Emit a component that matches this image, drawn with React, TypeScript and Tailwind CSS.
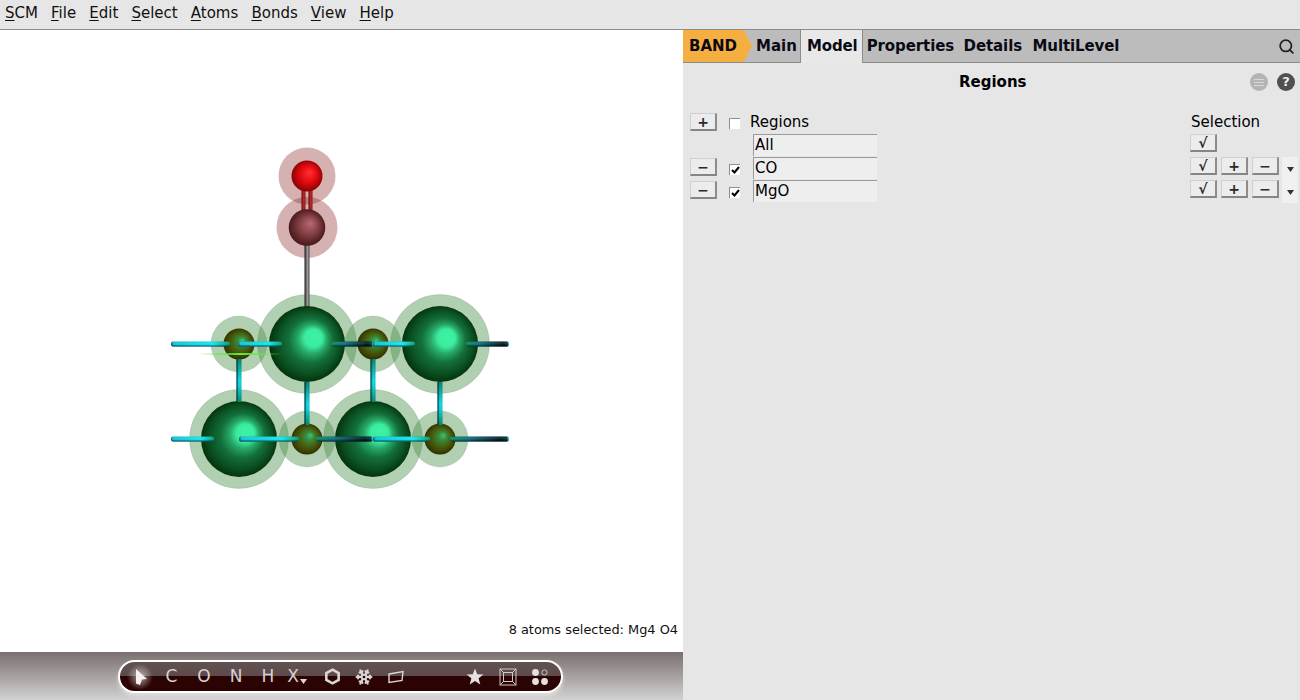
import React from "react";
import { Search, Snowflake } from "lucide-react";

const FONT = "[font-family:'DejaVu_Sans',sans-serif]";

const menus = [
  ["S", "CM"],
  ["F", "ile"],
  ["E", "dit"],
  ["S", "elect"],
  ["A", "toms"],
  ["B", "onds"],
  ["V", "iew"],
  ["H", "elp"],
];

const bigAtoms = [
  [307, 344],
  [440, 344],
  [239, 439],
  [373, 439],
];
const smallAtoms = [
  [239, 344],
  [373, 344],
  [307, 439],
  [440, 439],
];

// horizontal bonds: y, x1, x2, kind
const hBonds: [number, number, number, "cyan" | "dark"][] = [
  [344, 171, 230, "cyan"],
  [344, 238, 282, "cyan"],
  [344, 332, 373, "dark"],
  [344, 373, 415, "cyan"],
  [344, 466, 509, "dark"],
  [439, 171, 214, "cyan"],
  [439, 239, 299, "cyan"],
  [439, 316, 373, "dark"],
  [439, 373, 430, "cyan"],
  [439, 450, 509, "dark"],
];
const vBonds: [number, number, number][] = [
  [239, 359, 402],
  [307, 382, 425],
  [373, 359, 402],
  [440, 382, 425],
];

function Molecule() {
  return (
    <svg viewBox="0 30 683 622" className="block h-[622px] w-[683px]">
      <defs>
        <radialGradient id="big" cx="0.5" cy="0.5" r="0.53" fx="0.61" fy="0.4">
          <stop offset="0" stopColor="#3ef2a2" />
          <stop offset="0.22" stopColor="#3becA0" />
          <stop offset="0.36" stopColor="#27a868" />
          <stop offset="0.55" stopColor="#13703a" />
          <stop offset="0.78" stopColor="#0b5022" />
          <stop offset="1" stopColor="#012c04" />
        </radialGradient>
        <radialGradient id="small" cx="0.5" cy="0.5" r="0.54" fx="0.62" fy="0.38">
          <stop offset="0" stopColor="#3cc47c" />
          <stop offset="0.25" stopColor="#3a8a3a" />
          <stop offset="0.6" stopColor="#465a0c" />
          <stop offset="0.85" stopColor="#3a3c02" />
          <stop offset="1" stopColor="#1c2a00" />
        </radialGradient>
        <radialGradient id="oxy" cx="0.5" cy="0.5" r="0.56" fx="0.6" fy="0.38">
          <stop offset="0" stopColor="#ff3030" />
          <stop offset="0.45" stopColor="#e80c12" />
          <stop offset="1" stopColor="#7a0000" />
        </radialGradient>
        <radialGradient id="carb" cx="0.5" cy="0.5" r="0.56" fx="0.6" fy="0.38">
          <stop offset="0" stopColor="#b86a70" />
          <stop offset="0.5" stopColor="#7f3d42" />
          <stop offset="1" stopColor="#3b1012" />
        </radialGradient>
        <linearGradient id="cyanB" x1="0" x2="1" y1="0" y2="0">
          <stop offset="0" stopColor="#0b5a68" />
          <stop offset="0.05" stopColor="#10c8d8" />
          <stop offset="0.7" stopColor="#12eaf4" />
          <stop offset="0.92" stopColor="#0cb09a" />
          <stop offset="1" stopColor="#0a9068" />
        </linearGradient>
        <linearGradient id="darkB" x1="0" x2="1" y1="0" y2="0">
          <stop offset="0" stopColor="#0a8a60" />
          <stop offset="0.3" stopColor="#0c7080" />
          <stop offset="0.85" stopColor="#031c20" />
          <stop offset="0.96" stopColor="#06303a" />
          <stop offset="1" stopColor="#18e6f0" />
        </linearGradient>
        <linearGradient id="vB" x1="0" x2="0" y1="0" y2="1">
          <stop offset="0" stopColor="#0a8a7c" />
          <stop offset="0.5" stopColor="#14e0ec" />
          <stop offset="0.62" stopColor="#14d8e8" />
          <stop offset="1" stopColor="#0a9070" />
        </linearGradient>
        <linearGradient id="shadeV" x1="0" x2="0" y1="0" y2="1">
          <stop offset="0" stopColor="#000" stopOpacity="0.1" />
          <stop offset="0.3" stopColor="#fff" stopOpacity="0.15" />
          <stop offset="0.65" stopColor="#000" stopOpacity="0" />
          <stop offset="1" stopColor="#000" stopOpacity="0.75" />
        </linearGradient>
        <linearGradient id="shadeH" x1="0" x2="1" y1="0" y2="0">
          <stop offset="0" stopColor="#000" stopOpacity="0.8" />
          <stop offset="0.45" stopColor="#000" stopOpacity="0" />
          <stop offset="1" stopColor="#000" stopOpacity="0.1" />
        </linearGradient>
        <linearGradient id="grayB" x1="0" x2="1" y1="0" y2="0">
          <stop offset="0" stopColor="#1c1c1c" />
          <stop offset="0.6" stopColor="#9a9a9a" />
          <stop offset="1" stopColor="#444" />
        </linearGradient>
        <linearGradient id="redB" x1="0" x2="1" y1="0" y2="0">
          <stop offset="0" stopColor="#5e0a0a" />
          <stop offset="0.6" stopColor="#c62a2a" />
          <stop offset="1" stopColor="#7c1414" />
        </linearGradient>
      </defs>

      {/* translucent shells */}
      {bigAtoms.map(([x, y]) => (
        <circle key={`hb${x}${y}`} cx={x} cy={y} r={49.5} fill="rgb(70,140,70)" fillOpacity={0.42} stroke="#6f8a6f" strokeOpacity={0.2} />
      ))}
      {smallAtoms.map(([x, y]) => (
        <circle key={`hs${x}${y}`} cx={x} cy={y} r={28} fill="rgb(70,140,70)" fillOpacity={0.42} stroke="#6f8a6f" strokeOpacity={0.2} />
      ))}
      <circle cx={307} cy={176} r={28.5} fill="rgb(140,40,40)" fillOpacity={0.36} />
      <circle cx={307} cy={227.5} r={30.5} fill="rgb(140,40,40)" fillOpacity={0.36} />

      {/* carbon-oxygen and carbon-surface bonds */}
      <rect x={301.5} y={188} width={4} height={26} fill="url(#redB)" />
      <rect x={308.5} y={188} width={4} height={26} fill="url(#redB)" />
      <rect x={304.5} y={244} width={5} height={64} fill="url(#grayB)" />

      {/* spheres */}
      {bigAtoms.map(([x, y]) => (
        <circle key={`b${x}${y}`} cx={x} cy={y} r={38} fill="url(#big)" />
      ))}
      {smallAtoms.map(([x, y]) => (
        <circle key={`s${x}${y}`} cx={x} cy={y} r={15.5} fill="url(#small)" />
      ))}
      <circle cx={307} cy={176} r={15.5} fill="url(#oxy)" />
      <circle cx={307} cy={227.5} r={18.3} fill="url(#carb)" />

      {/* vertical bonds */}
      {vBonds.map(([x, y1, y2]) => (
        <g key={`v${x}`}>
          <rect x={x - 2.5} y={y1} width={5} height={y2 - y1} fill="url(#vB)" />
          <rect x={x - 2.5} y={y1} width={5} height={y2 - y1} fill="url(#shadeH)" />
        </g>
      ))}

      {/* horizontal bonds */}
      {hBonds.map(([y, x1, x2, kind]) => (
        <g key={`h${y}${x1}`}>
          <rect
            x={x1}
            y={y - 2.5}
            width={x2 - x1}
            height={5}
            rx={2}
            fill={kind === "cyan" ? "url(#cyanB)" : "url(#darkB)"}
          />
          <rect x={x1} y={y - 2.5} width={x2 - x1} height={5} rx={2} fill="url(#shadeV)" />
        </g>
      ))}

      {/* selection sliver */}
      <polygon points="198,354 240,353 283,354 240,355" fill="#5cf03a" />
    </svg>
  );
}

function BevelBtn({ children, w = "w-[27px]" }: { children: React.ReactNode; w?: string }) {
  return (
    <div
      className={`${w} flex h-[18px] shrink-0 items-center justify-center border border-b-2 border-r-2 border-t-[#cfcfcf] border-l-[#cfcfcf] border-r-[#8c8c8c] border-b-[#858585] bg-[#ececec] text-[14px] leading-none font-bold text-[#2a2a2a]`}
    >
      {children}
    </div>
  );
}

function Check({ on }: { on: boolean }) {
  return (
    <div className="flex h-[11px] w-[11px] shrink-0 items-center justify-center border-t border-l border-[#8f8f8f] bg-white">
      {on && (
        <svg width="9" height="8" viewBox="0 0 9 8">
          <path d="M1 4 L3.5 6.5 L8 1" fill="none" stroke="#000" strokeWidth="2" />
        </svg>
      )}
    </div>
  );
}

function NameField({ label }: { label: string }) {
  return (
    <div className="h-[22px] w-[124px] shrink-0 border-t border-l border-[#9a9a9a] bg-[#eeeeee] pl-[1px] text-[15px] leading-[20px] text-black">
      {label}
    </div>
  );
}

function Caret() {
  return (
    <svg width="7" height="5" viewBox="0 0 7 5">
      <polygon points="0,0 7,0 3.5,5" fill="#333" />
    </svg>
  );
}

function RegionRow({ label }: { label: string }) {
  return (
    <div className="flex h-[23px] items-start pl-[7px]">
      <div className="mt-[1px]">
        <BevelBtn>−</BevelBtn>
      </div>
      <div className="mt-[7px] ml-[12px]">
        <Check on />
      </div>
      <div className="ml-[13px]">
        <NameField label={label} />
      </div>
      <div className="ml-auto flex h-[23px] w-[110px] items-start gap-[4px] pr-[2px]">
        <BevelBtn>√</BevelBtn>
        <BevelBtn>+</BevelBtn>
        <BevelBtn>−</BevelBtn>
        <div className="-ml-[1px] flex h-[23px] w-[16px] items-center justify-center bg-[#f0f0f0] pt-[2px]">
          <Caret />
        </div>
      </div>
    </div>
  );
}

function ToolCell({ children }: { children: React.ReactNode }) {
  return (
    <div className="flex h-full w-[32px] shrink-0 items-center justify-center text-[17px] text-[#d8d1d1]">
      {children}
    </div>
  );
}

function Toolbar() {
  return (
    <div className="flex h-[48px] bg-[linear-gradient(#7a6f6e,#d2d2d2)] pt-[8px] pl-[118px]">
      <div className="flex h-[33px] w-[445px] items-center rounded-[17px] border-2 border-white bg-[linear-gradient(#625151_0%,#5d4b4b_50%,#2b0303_50%,#2b0303_100%)] pl-[4px] shadow-[0_3px_4px_rgba(255,255,255,0.45)]">
        <ToolCell>
          <svg width="30" height="30" viewBox="0 0 30 30" className="shrink-0">
            <defs>
              <radialGradient id="glow">
                <stop offset="0" stopColor="#fff" stopOpacity="0.6" />
                <stop offset="1" stopColor="#fff" stopOpacity="0" />
              </radialGradient>
            </defs>
            <circle cx="15" cy="15" r="13" fill="url(#glow)" />
            <polygon points="11,7 22,17 17,17.5 15,23 11,21.5" fill="#f4f0f0" />
          </svg>
        </ToolCell>
        <ToolCell>
          <span className="-ml-[1px]">C</span>
        </ToolCell>
        <ToolCell>O</ToolCell>
        <ToolCell>N</ToolCell>
        <ToolCell>H</ToolCell>
        <ToolCell>
          <span className="-ml-[6px]">X</span>
          <svg width="7" height="5" viewBox="0 0 7 5" className="mt-[9px] ml-[1px]">
            <polygon points="0,0 7,0 3.5,5" fill="#ddd6d6" />
          </svg>
        </ToolCell>
        <ToolCell>
          <svg width="17" height="17" viewBox="0 0 16 16">
            <polygon points="8,1.5 13.8,4.8 13.8,11.2 8,14.5 2.2,11.2 2.2,4.8" fill="none" stroke="#ddd6d6" strokeWidth="2.4" />
          </svg>
        </ToolCell>
        <ToolCell>
          <div className="-ml-[1px]">
            <Snowflake size={18} strokeWidth={2.6} color="#ddd6d6" />
          </div>
        </ToolCell>
        <ToolCell>
          <svg width="18" height="14" viewBox="0 0 18 14">
            <polygon points="2,4 16,1.5 15,10.5 2,12.5" fill="none" stroke="#ddd6d6" strokeWidth="1.4" />
          </svg>
        </ToolCell>
        <div className="w-[47px] shrink-0" />
        <ToolCell>
          <svg width="18" height="17" viewBox="0 0 17 16">
            <polygon points="8.5,0.5 10.6,5.8 16.5,6.1 11.9,9.7 13.5,15.5 8.5,12.2 3.5,15.5 5.1,9.7 0.5,6.1 6.4,5.8" fill="#e6e0e0" />
          </svg>
        </ToolCell>
        <div className="ml-[1px]">
          <ToolCell>
            <svg width="18" height="18" viewBox="0 0 18 18" fill="none" stroke="#cfc8c8" strokeWidth="1">
              <rect x="1" y="1" width="16" height="16" />
              <rect x="4.5" y="4.5" width="9" height="9" />
              <path d="M1 1 L4.5 4.5 M17 1 L13.5 4.5 M1 17 L4.5 13.5 M17 17 L13.5 13.5" />
            </svg>
          </ToolCell>
        </div>
        <ToolCell>
          <svg width="18" height="18" viewBox="0 0 18 18">
            <circle cx="4.5" cy="4.5" r="3.4" fill="#e6e0e0" />
            <circle cx="13.5" cy="4.5" r="2.6" fill="none" stroke="#cfc8c8" strokeWidth="1" />
            <circle cx="4.5" cy="13.5" r="3.4" fill="#e6e0e0" />
            <circle cx="13.5" cy="13.5" r="3.4" fill="#e6e0e0" />
          </svg>
        </ToolCell>
      </div>
    </div>
  );
}

export default function App() {
  return (
    <div className={`${FONT} flex h-[700px] w-[1300px] flex-col overflow-hidden bg-[#e6e6e6] text-[15px] text-black`}>
      <div className="flex h-[30px] items-center gap-[13.1px] border-b border-[#8c8c8c] bg-[#e6e6e6] pb-[2px] pl-[5px] text-[#111]">
        {menus.map(([a, b], i) => (
          <span key={i}>
            <span className="underline underline-offset-2">{a}</span>
            {b}
          </span>
        ))}
      </div>
      <div className="flex flex-1">
        <div className="flex w-[683px] shrink-0 flex-col bg-white">
          <div className="relative h-[622px]">
            <Molecule />
            <div className="absolute right-[5px] bottom-[13px] text-[12.9px] leading-[18px] text-[#111]">
              8 atoms selected: Mg4 O4
            </div>
          </div>
          <Toolbar />
        </div>
        <div className="flex flex-1 flex-col">
          <div className="flex h-[33px] items-stretch border-b border-[#8c8c8c] bg-[#bcbcbc] font-bold text-[#0a0a14]">
            <div className="flex w-[69px] items-center bg-[#f5af41] pl-[6px] [clip-path:polygon(0_0,88%_0,100%_50%,88%_100%,0_100%)]">
              BAND
            </div>
            <div className="flex items-center pr-[3px] pl-[4px]">Main</div>
            <div className="-mb-[1px] flex items-center border-x border-[#8c8c8c] bg-[#e8e8e8] pr-[4px] pl-[6px] tracking-[-0.1px]">Model</div>
            <div className="flex items-center pl-[4px] tracking-[-0.1px]">Properties</div>
            <div className="flex items-center pl-[9.5px] tracking-[-0.1px]">Details</div>
            <div className="flex items-center pl-[10.5px] tracking-[-0.1px]">MultiLevel</div>
            <div className="ml-auto flex items-center pr-[5px]">
              <Search size={17} strokeWidth={2.5} color="#222" />
            </div>
          </div>
          <div className="flex h-[38px] items-center pr-[5px]">
            <div className="flex-1 pl-[276px] font-bold">Regions</div>
            <div className="flex h-[18px] w-[18px] flex-col items-center justify-center gap-[2px] rounded-full bg-[#b4b4b4]">
              <div className="h-px w-[10px] bg-[#d8d8d8]" />
              <div className="h-px w-[10px] bg-[#d8d8d8]" />
              <div className="h-px w-[10px] bg-[#d8d8d8]" />
            </div>
            <div className="ml-[9px] flex h-[18px] w-[18px] items-center justify-center rounded-full bg-[#505050] text-[13px] font-bold text-[#eee]">
              ?
            </div>
          </div>
          <div className="mt-[10px] flex h-[23px] items-start pl-[7px]">
            <div className="mt-[2px]">
              <BevelBtn>+</BevelBtn>
            </div>
            <div className="mt-[7px] ml-[12px]">
              <Check on={false} />
            </div>
            <div className="ml-[10px] leading-[22px]">Regions</div>
            <div className="ml-auto w-[109px] leading-[22px]">Selection</div>
          </div>
          <div className="flex h-[23px] items-start pl-[7px]">
            <div className="ml-[63px]">
              <NameField label="All" />
            </div>
            <div className="ml-auto w-[110px]">
              <BevelBtn>√</BevelBtn>
            </div>
          </div>
          <RegionRow label="CO" />
          <RegionRow label="MgO" />
        </div>
      </div>
    </div>
  );
}
